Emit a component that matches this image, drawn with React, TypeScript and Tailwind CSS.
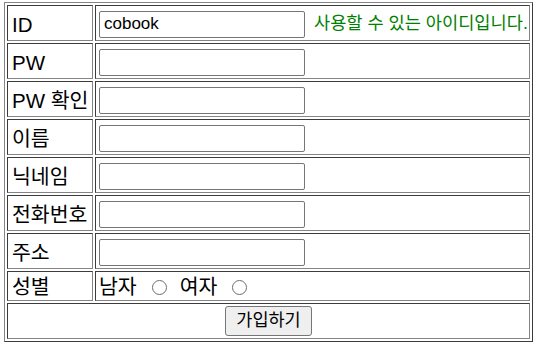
import { useState } from 'react';

const fields = ['PW', 'PW 확인', '이름', '닉네임', '전화번호', '주소'];

const cell =
  'border border-t-[#3c3c3c] border-l-[#3c3c3c] border-r-[#858585] border-b-[#858585] p-0 align-middle';

const labelCell = `${cell} h-[36px] pl-[4px] pt-[5px] text-[20.5px] leading-none whitespace-nowrap`;

function TextBox({ value }: { value?: string }) {
  return (
    <input
      type="text"
      defaultValue={value}
      className="block w-[206px] h-[27px] border border-[#767676] rounded-[2px] bg-white px-[4px] text-[17px] text-black outline-none"
    />
  );
}

export default function App() {
  const [gender, setGender] = useState('');

  return (
    <div className="w-[540px] h-[351px] bg-white pl-[4px] pt-[2px] text-black font-['Liberation_Sans','Noto_Sans_CJK_KR',sans-serif]">
      <table className="table-fixed w-[529px] border-separate border-spacing-[2px] border border-t-[#858585] border-l-[#858585] border-r-[#3c3c3c] border-b-[#3c3c3c]">
        <tbody>
          <tr>
            <td className={`${labelCell} w-[86px]`}>ID</td>
            <td className={`${cell} h-[36px] pl-[3px]`}>
              <div className="flex items-center pt-[2px]">
                <TextBox value="cobook" />
                <span className="ml-[9px] text-[17.6px] text-[#008000] leading-none whitespace-nowrap">
                  사용할 수 있는 아이디입니다.
                </span>
              </div>
            </td>
          </tr>
          {fields.map((label) => (
            <tr key={label}>
              <td className={labelCell}>{label}</td>
              <td className={`${cell} h-[36px] pl-[3px]`}>
                <div className="flex items-center pt-[2px]">
                  <TextBox />
                </div>
              </td>
            </tr>
          ))}
          <tr>
            <td className={`${cell} h-[30px] pl-[4px] pt-[3px] text-[20.5px] leading-none`}>성별</td>
            <td className={`${cell} h-[30px] pl-[3px] pt-[3px]`}>
              <div className="flex items-center text-[20.5px] leading-none">
                <span>남자</span>
                <input
                  type="radio"
                  name="gender"
                  checked={gender === 'm'}
                  onChange={() => setGender('m')}
                  className="appearance-none shrink-0 m-0 w-[15px] h-[15px] rounded-full border-[1.5px] border-[#6e6e6e] bg-white ml-[15px] mr-[13px]"
                />
                <span>여자</span>
                <input
                  type="radio"
                  name="gender"
                  checked={gender === 'f'}
                  onChange={() => setGender('f')}
                  className="appearance-none shrink-0 m-0 w-[15px] h-[15px] rounded-full border-[1.5px] border-[#6e6e6e] bg-white ml-[15px]"
                />
              </div>
            </td>
          </tr>
          <tr>
            <td colSpan={2} className={`${cell} h-[36px] text-center`}>
              <button className="w-[87px] h-[30px] border border-[#767676] rounded-[3px] bg-[#efefef] text-[17.5px] text-black leading-none">
                가입하기
              </button>
            </td>
          </tr>
        </tbody>
      </table>
    </div>
  );
}
